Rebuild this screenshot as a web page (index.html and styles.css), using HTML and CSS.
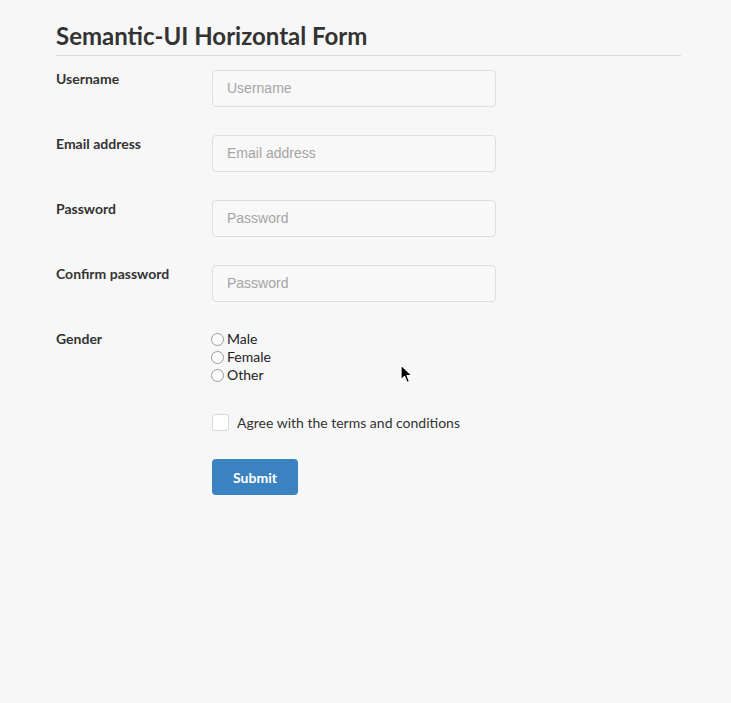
FILE: index.html
```html
<!DOCTYPE html>
<html>
<head>
<meta charset="utf-8">
<link rel="stylesheet" href="styles.css">
</head>
<body>
<div class="page">
  <h1 class="title">Semantic-UI Horizontal Form</h1>
  <form class="form">
    <div class="field">
      <label class="label">Username</label>
      <input class="input" type="text" placeholder="Username">
    </div>
    <div class="field">
      <label class="label">Email address</label>
      <input class="input" type="text" placeholder="Email address">
    </div>
    <div class="field">
      <label class="label">Password</label>
      <input class="input" type="password" placeholder="Password">
    </div>
    <div class="field">
      <label class="label">Confirm password</label>
      <input class="input" type="password" placeholder="Password">
    </div>
    <div class="field gender">
      <label class="label">Gender</label>
      <div class="radios">
        <label class="radio"><span class="circle"></span>Male</label>
        <label class="radio"><span class="circle"></span>Female</label>
        <label class="radio"><span class="circle"></span>Other</label>
      </div>
    </div>
    <div class="field agree">
      <span class="label"></span>
      <label class="check"><span class="box"></span>Agree with the terms and conditions</label>
    </div>
    <div class="field submit-row">
      <span class="label"></span>
      <button class="button" type="button">Submit</button>
    </div>
  </form>
</div>
<svg class="cursor" width="14" height="20" viewBox="0 0 14 20">
  <path d="M1 1 L1 16 L4.5 12.5 L7 18.5 L9.5 17.5 L7 11.5 L12 11.5 Z" fill="#000" stroke="#fff" stroke-width="1.2" stroke-linejoin="round"/>
</svg>
</body>
</html>
```
FILE: styles.css
```css
html, body {
  margin: 0;
  padding: 0;
  background: #f7f7f7;
}
body {
  font-family: Lato, "Liberation Sans", sans-serif;
  color: rgba(0,0,0,0.8);
  height: 703px;
  position: relative;
}
.page {
  width: 625px;
  margin-left: 56px;
  padding-top: 20px;
}
.title {
  margin: 0;
  font-size: 24px;
  font-weight: 700;
  line-height: 32px;
  color: #333;
  padding-bottom: 3px;
  border-bottom: 1px solid #dcdcdc;
}
.form {
  padding-top: 14px;
}
.field {
  display: flex;
  align-items: flex-start;
  margin-bottom: 28px;
}
.label {
  width: 156px;
  flex: none;
  font-size: 14px;
  font-weight: 700;
  line-height: 18px;
  color: #333;
  padding-top: 0;
}
.input {
  box-sizing: border-box;
  width: 284px;
  height: 37px;
  margin: 0;
  border: 1px solid #dededf;
  border-radius: 4px;
  background: #f8f8f8;
  padding: 0 14px 2px;
  font-family: "Liberation Sans", Arial, sans-serif;
  font-size: 14px;
  outline: none;
}
.input::placeholder {
  color: #a5a5a5;
}
.gender {
  margin-bottom: 0;
}
.radios {
  display: flex;
  flex-direction: column;
  padding-top: 0;
}
.radio {
  display: flex;
  align-items: center;
  font-size: 14px;
  line-height: 18px;
  color: #222;
  margin-left: -1px;
}
.circle {
  box-sizing: border-box;
  width: 13px;
  height: 13px;
  border: 1px solid #9c9c9c;
  border-radius: 50%;
  background: #fcfcfc;
  margin-right: 3px;
}
.agree {
  margin-top: 30px;
  margin-bottom: 28px;
}
.check {
  display: flex;
  align-items: center;
  font-size: 14px;
  line-height: 17px;
  color: #333;
}
.box {
  box-sizing: border-box;
  width: 17px;
  height: 17px;
  border: 1px solid #d8d8d8;
  border-radius: 3px;
  background: #fff;
  margin-right: 8px;
}
.button {
  width: 86px;
  height: 36px;
  border: none;
  border-radius: 4px;
  background: #3b83c0;
  color: #fff;
  font-family: Lato, "Liberation Sans", sans-serif;
  font-weight: 700;
  font-size: 14px;
  padding: 0;
  margin: 0;
}
.cursor {
  position: absolute;
  left: 400px;
  top: 364px;
}
```
